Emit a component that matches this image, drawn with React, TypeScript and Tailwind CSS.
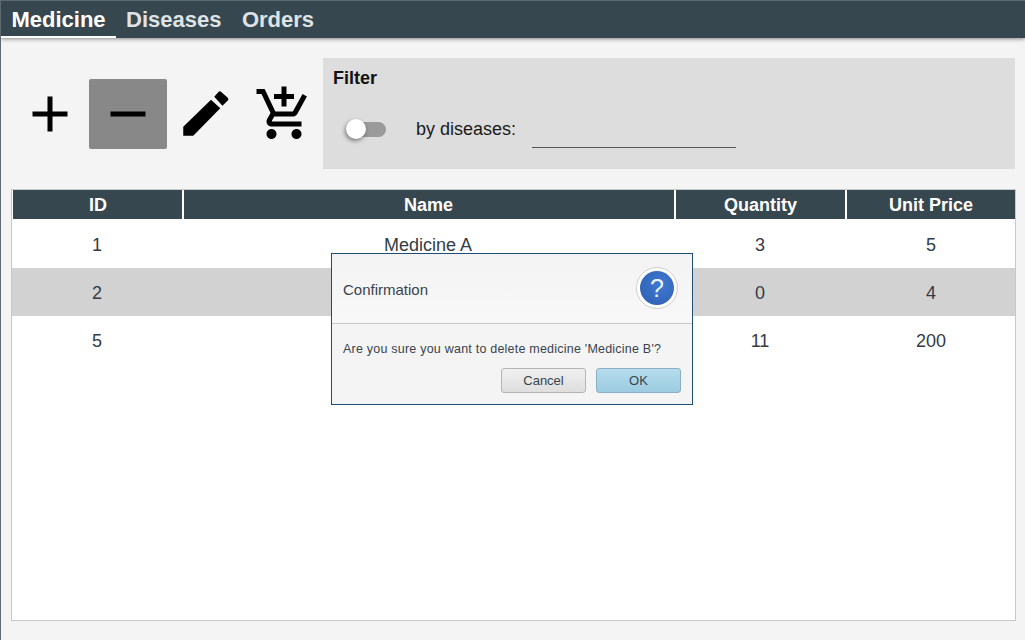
// only Medicine A is readable, the dialog covers the other two names
const rows = [
  { id: 1, name: "Medicine A", qty: 3, price: 5 },
  { id: 2, name: "", qty: 0, price: 4 },
  { id: 5, name: "", qty: 11, price: 200 },
];

const cols = "grid grid-cols-[172px_492px_171px_168px]";

function ToolButton({ active, children }: { active?: boolean; children: React.ReactNode }) {
  return (
    <button className={`flex h-[70px] w-[78px] items-center justify-center rounded-[2px] ${active ? "bg-[#888888]" : ""}`}>
      <svg viewBox="0 0 24 24" className="h-[60px] w-[60px]" fill="black">
        {children}
      </svg>
    </button>
  );
}

function ConfirmDialog() {
  return (
    <div className="absolute left-[330px] top-[253px] h-[152px] w-[362px] border border-[#1d4f76] bg-[#f4f4f4] font-['Liberation_Sans',sans-serif] text-[#39434d]">
      <div className="flex h-[70px] items-center justify-between border-b border-[#c8c8c8] bg-gradient-to-b from-[#f3f3f3] to-[#f8f8f8] pl-[11px] pr-[14px]">
        <span className="pt-[3px] text-[15px]">Confirmation</span>
        <svg viewBox="0 0 42 42" className="mb-[2px] h-[42px] w-[42px]">
          <defs>
            <radialGradient id="help-blue" cx="60%" cy="40%" r="70%">
              <stop offset="0%" stopColor="#4079d2" />
              <stop offset="100%" stopColor="#2f62b5" />
            </radialGradient>
          </defs>
          <circle cx="21" cy="21" r="20.5" fill="#ffffff" stroke="#cfcfcf" />
          <circle cx="21" cy="21" r="17" fill="url(#help-blue)" />
          <text x="21" y="30" textAnchor="middle" fontSize="25" fill="#eef3fb" fontFamily="Liberation Sans, sans-serif">?</text>
        </svg>
      </div>
      <p className="pl-[11px] pt-[18px] text-[12.5px] leading-[15px] tracking-[0.22px]">Are you sure you want to delete medicine 'Medicine B'?</p>
      <div className="mt-[11px] flex justify-end gap-[10px] pr-[11px]">
        <button className="h-[25px] w-[85px] rounded-[3px] border border-[#b5b5b5] bg-gradient-to-b from-[#f0f0f0] to-[#dedede] text-[13px]">Cancel</button>
        <button className="h-[25px] w-[85px] rounded-[3px] border border-[#8bb0c4] bg-gradient-to-b from-[#b5dcec] to-[#9ccbe0] text-[13px]">OK</button>
      </div>
    </div>
  );
}

export default function App() {
  return (
    <div className="relative flex h-[640px] w-[1025px] flex-col overflow-hidden border-l border-[#5f6a70] bg-[#f4f4f4] font-['Liberation_Sans',sans-serif]">
      <nav className="flex h-[38px] border-t border-[#5c6a72] bg-[#37474f] text-[22px] font-bold shadow-[0_1px_4px_rgba(0,0,0,0.45)]">
        <span className="flex h-[37px] w-[115px] items-center justify-center border-b-2 border-white pt-[1px] text-white">Medicine</span>
        <span className="flex h-[37px] items-center pl-[10px] text-[#dfe3e5]">Diseases</span>
        <span className="flex h-[37px] items-center pl-[20.5px] text-[#dfe3e5]">Orders</span>
      </nav>

      <div className="mt-[20px] flex items-center pl-[10px] pr-[10px]">
        <ToolButton>
          <path d="M19 13h-6v6h-2v-6H5v-2h6V5h2v6h6v2z" />
        </ToolButton>
        <ToolButton active>
          <path d="M19 13H5v-2h14v2z" />
        </ToolButton>
        <ToolButton>
          <path d="M2.9 20.7v-3.6L14 6.3l3.7 3.4L6.9 20.7z" />
          <path d="M15.3 5.1l1.7-1.9c.3-.4.8-.4 1.1 0l2.6 2.3c.3.4.3.8 0 1.1l-2.1 2.1z" />
        </ToolButton>
        <ToolButton>
          <path d="M11 9h2V6h3V4h-3V1h-2v3H8v2h3v3zm-4 9c-1.1 0-1.99.9-1.99 2S5.9 22 7 22s2-.9 2-2-.9-2-2-2zm10 0c-1.1 0-1.99.9-1.99 2s.89 2 1.99 2 2-.9 2-2-.9-2-2-2zm-9.83-3.25l.03-.12.9-1.63h7.45c.75 0 1.41-.41 1.75-1.03l3.86-7.01L19.42 4h-.01l-1.1 2-2.76 5H8.53l-.13-.27L6.16 6l-.95-2-.94-2H1v2h2l3.6 7.59-1.35 2.45c-.16.28-.25.61-.25.96 0 1.1.9 2 2 2h12v-2H7.42c-.13 0-.25-.11-.25-.25z" />
        </ToolButton>
        <section className="h-[111px] flex-1 bg-[#dddddd] pl-[10px] pt-[10px]">
          <h2 className="text-[18px] font-bold leading-[20px] text-[#111111]">Filter</h2>
          <div className="mt-[22px] flex items-center">
            <span className="relative ml-[13px] block h-[15px] w-[40px]">
              <span className="absolute right-0 top-0 h-[15px] w-[30px] rounded-full bg-[#9a9a9a]" />
              <span className="absolute left-0 top-[-3px] h-[20px] w-[20px] rounded-full bg-white shadow-[-1px_2px_4px_rgba(0,0,0,0.45)]" />
            </span>
            <span className="ml-[30px] text-[18px] leading-[20px] text-[#1a1a1a]">by diseases:</span>
            <span className="ml-[16px] mt-[18px] block h-[20px] w-[204px] border-b border-[#555555]" />
          </div>
        </section>
      </div>

      <main className="ml-[10px] mt-[20px] h-[432px] w-[1005px] border border-[#c8c8c8] bg-white">
        <div className={`${cols} h-[29px] text-[18px] font-bold text-white`}>
          {["ID", "Name", "Quantity", "Unit Price"].map((label) => (
            <div key={label} className="flex items-center justify-center border-r-2 border-white bg-[#37474f] pt-[2px] first:ml-[1px] first:pl-[1px] last:border-r-0 [&:nth-child(2)]:pr-[1px]">
              {label}
            </div>
          ))}
        </div>
        <div className="mt-[1px]">
          {rows.map((row, i) => (
            <div key={row.id} className={`${cols} h-[48px] items-center text-[18px] text-[#333c45] ${i === 1 ? "bg-[#d2d2d2]" : "bg-white"}`}>
              <div className="pr-[2px] pt-[2px] text-center">{row.id}</div>
              <div className="pr-[4px] pt-[2px] text-center">{row.name}</div>
              <div className="pr-[3px] pt-[2px] text-center">{row.qty}</div>
              <div className="pt-[2px] text-center">{row.price}</div>
            </div>
          ))}
        </div>
      </main>

      <ConfirmDialog />
    </div>
  );
}
